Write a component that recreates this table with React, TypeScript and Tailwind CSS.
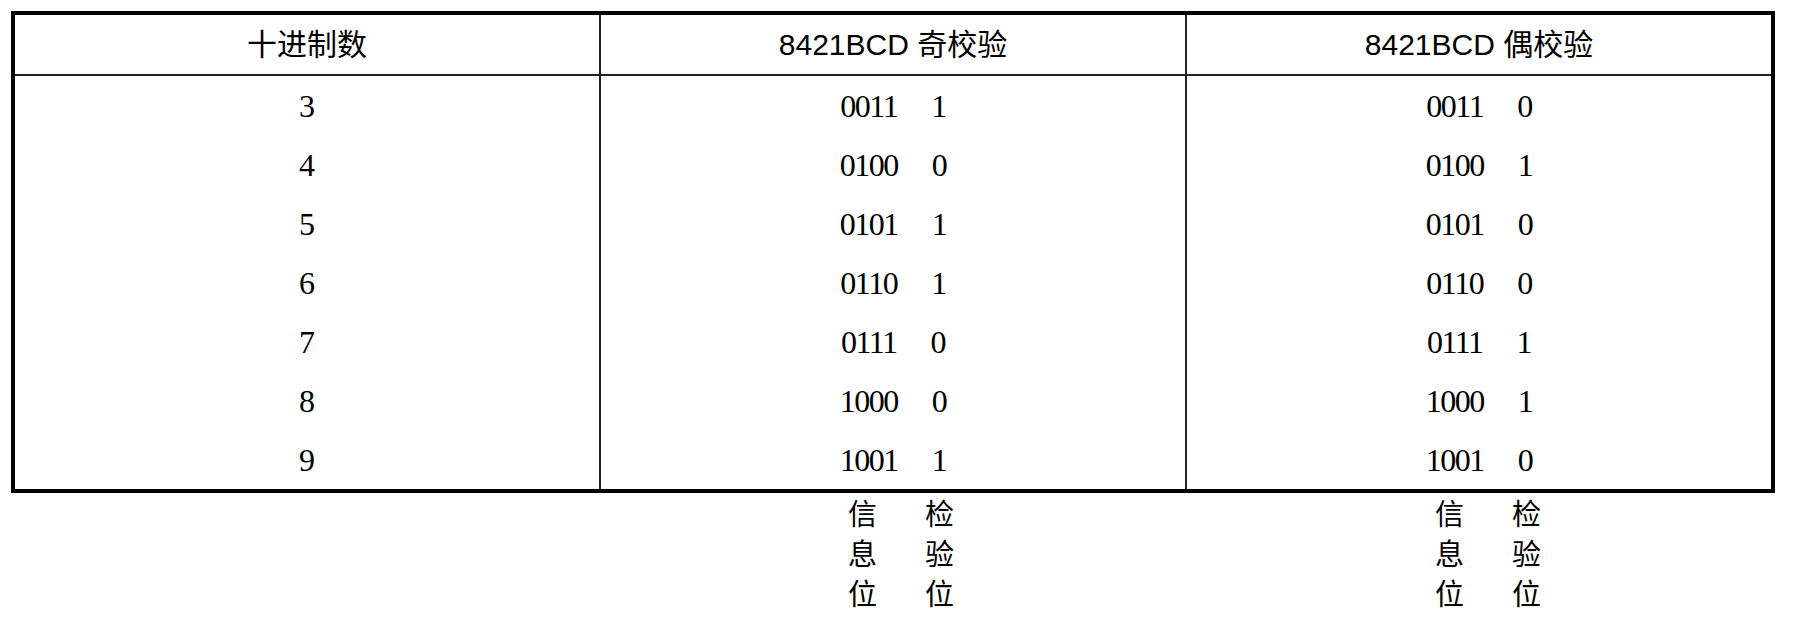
const rows = [
  { d: "3", odd: ["0011", "1"], even: ["0011", "0"] },
  { d: "4", odd: ["0100", "0"], even: ["0100", "1"] },
  { d: "5", odd: ["0101", "1"], even: ["0101", "0"] },
  { d: "6", odd: ["0110", "1"], even: ["0110", "0"] },
  { d: "7", odd: ["0111", "0"], even: ["0111", "1"] },
  { d: "8", odd: ["1000", "0"], even: ["1000", "1"] },
  { d: "9", odd: ["1001", "1"], even: ["1001", "0"] },
];

const sans = "font-['Liberation_Sans','Noto_Sans_CJK_SC',sans-serif]";
const serif = "font-['Liberation_Serif','Noto_Serif_CJK_SC',serif]";

function Code({ bits, parity }: { bits: string; parity: string }) {
  return (
    <div className={`${serif} flex items-center justify-center text-[32px] leading-none tracking-[-1.5px] text-black`}>
      <span>{bits}</span>
      <span className="ml-[34px]">{parity}</span>
    </div>
  );
}

function Legend() {
  return (
    <div className="flex justify-center gap-[48px] pl-[14px] -mt-[3px] font-['Noto_Sans_CJK_SC',sans-serif] text-[29px] leading-[40px] text-black">
      <div className="flex flex-col items-center">
        <span>信</span>
        <span>息</span>
        <span>位</span>
      </div>
      <div className="flex flex-col items-center">
        <span>检</span>
        <span>验</span>
        <span>位</span>
      </div>
    </div>
  );
}

export default function App() {
  return (
    <div className="w-[1795px] h-[632px] bg-white pl-[11px] pt-[11px]">
      <div className="w-[1764px]">
        <div className="border-4 border-black">
          <div className="grid grid-cols-[586px_586px_1fr]">
            <div className={`${sans} h-[61px] flex items-center justify-center border-r-2 border-b-2 border-[#222] text-[30px] text-black`}>
              十进制数
            </div>
            <div className={`${sans} h-[61px] flex items-center justify-center border-r-2 border-b-2 border-[#222] text-[30px] text-black`}>
              8421BCD 奇校验
            </div>
            <div className={`${sans} h-[61px] flex items-center justify-center border-b-2 border-[#222] text-[30px] text-black`}>
              8421BCD 偶校验
            </div>
            {rows.map((r) => (
              <div key={r.d} className="contents">
                <div className={`${serif} h-[59px] flex items-center justify-center border-r-2 border-[#222] text-[32px] leading-none text-black`}>
                  {r.d}
                </div>
                <div className="h-[59px] flex items-center justify-center border-r-2 border-[#222]">
                  <Code bits={r.odd[0]} parity={r.odd[1]} />
                </div>
                <div className="h-[59px] flex items-center justify-center">
                  <Code bits={r.even[0]} parity={r.even[1]} />
                </div>
              </div>
            ))}
          </div>
        </div>
        <div className="grid grid-cols-[590px_586px_1fr] pt-[2px]">
          <div />
          <Legend />
          <Legend />
        </div>
      </div>
    </div>
  );
}
